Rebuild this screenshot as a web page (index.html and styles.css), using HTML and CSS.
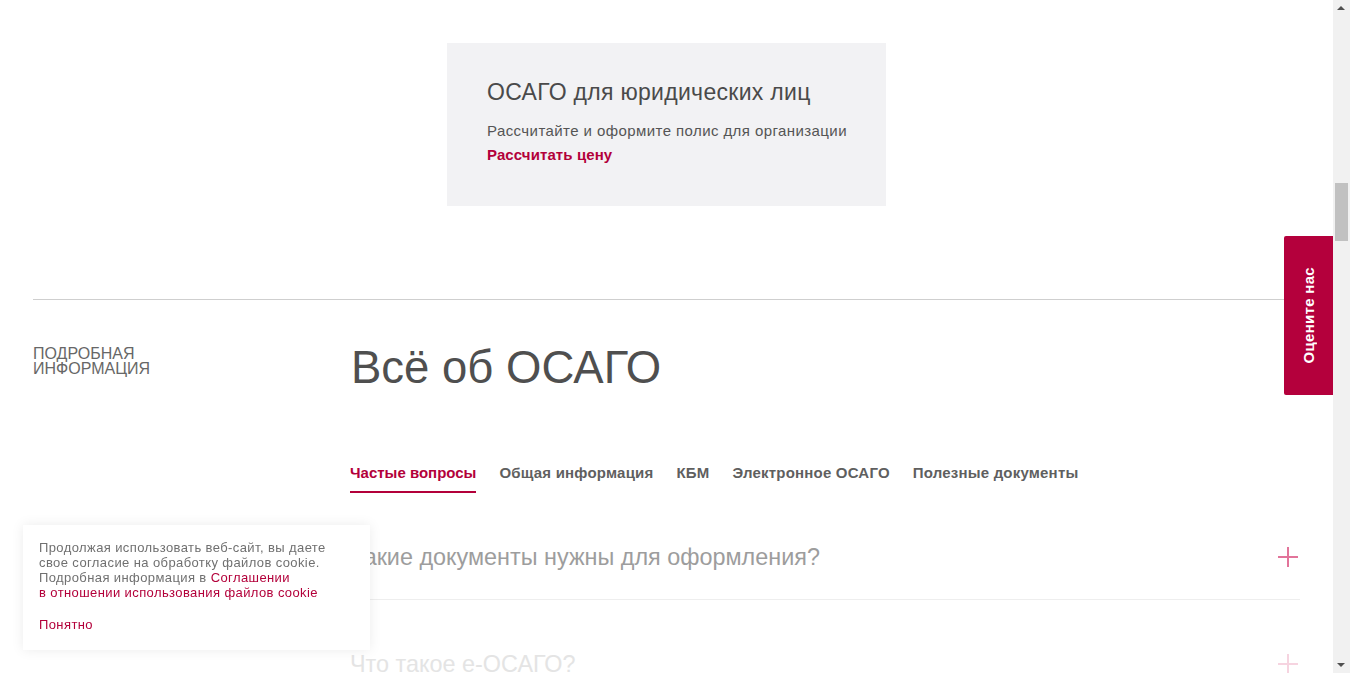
FILE: index.html
```html
<!DOCTYPE html>
<html lang="ru">
<head>
<meta charset="utf-8">
<title>Всё об ОСАГО</title>
<link rel="stylesheet" href="styles.css">
</head>
<body>
<div class="page">
  <section class="promo">
    <div class="promo-card">
      <h3 class="promo-title">ОСАГО для юридических лиц</h3>
      <p class="promo-text">Рассчитайте и оформите полис для организации</p>
      <a class="promo-link" href="#">Рассчитать цену</a>
    </div>
  </section>

  <section class="info">
    <div class="info-label">Подробная<br>информация</div>
    <div class="info-main">
      <h2 class="info-title">Всё об ОСАГО</h2>
      <nav class="tabs">
        <a class="tab tab-active" href="#">Частые вопросы</a>
        <a class="tab" href="#">Общая информация</a>
        <a class="tab" href="#">КБМ</a>
        <a class="tab" href="#">Электронное ОСАГО</a>
        <a class="tab" href="#">Полезные документы</a>
      </nav>
      <div class="faq">
        <div class="faq-item">
          <span class="faq-q">Какие документы нужны для оформления?</span>
          <span class="plus"></span>
        </div>
        <div class="faq-item faq-faded">
          <span class="faq-q">Что такое е-ОСАГО?</span>
          <span class="plus"></span>
        </div>
      </div>
    </div>
  </section>
</div>

<a class="rate-btn" href="#"><span>Оцените нас</span></a>

<div class="cookie">
  <p class="cookie-text">Продолжая использовать веб-сайт, вы даете<br>свое согласие на обработку файлов cookie.<br>Подробная информация в <a href="#">Соглашении<br>в отношении использования файлов cookie</a></p>
  <a class="cookie-ok" href="#">Понятно</a>
</div>

<div class="scrollbar">
  <span class="sb-arrow sb-up"></span>
  <span class="sb-thumb"></span>
  <span class="sb-arrow sb-down"></span>
</div>
</body>
</html>
```

FILE: styles.css
```css
* { box-sizing: border-box; }
html, body { margin: 0; padding: 0; }
body {
  font-family: "Liberation Sans", Arial, sans-serif;
  background: #fff;
  color: #4f4f4f;
  overflow: hidden;
  height: 673px;
}
a { text-decoration: none; }

.page { width: 1333px; height: 673px; overflow: hidden; }

.promo {
  display: flex;
  justify-content: center;
  padding-top: 43px;
}
.promo-card {
  width: 439px;
  height: 163px;
  background: #f2f2f4;
  padding: 36px 30px 0 40px;
}
.promo-title {
  margin: 0 0 14px;
  font-size: 23px;
  line-height: 26px;
  letter-spacing: 0.3px;
  font-weight: normal;
  color: #4a4a4a;
}
.promo-text {
  margin: 0;
  font-size: 15px;
  line-height: 24px;
  letter-spacing: 0.42px;
  white-space: nowrap;
  color: #555;
}
.promo-link {
  display: block;
  font-size: 15px;
  line-height: 24px;
  font-weight: bold;
  letter-spacing: 0.1px;
  color: #b3003a;
}

.info {
  margin: 93px 33px 0;
  border-top: 1px solid #cfcfcf;
  padding-top: 45px;
  display: grid;
  grid-template-columns: 317px 1fr;
}
.info-label {
  font-size: 16px;
  line-height: 15px;
  text-transform: uppercase;
  color: #676767;
  padding-top: 1px;
}
.info-title {
  margin: 0 0 73px 1px;
  font-size: 45.5px;
  line-height: 45px;
  font-weight: normal;
  color: #4f4f4f;
}
.tabs {
  display: flex;
  gap: 23px;
}
.tab {
  font-size: 15px;
  line-height: 20px;
  font-weight: bold;
  color: #5f5f5f;
  padding-bottom: 8px;
  border-bottom: 2px solid transparent;
  letter-spacing: 0.2px;
}
.tab-active {
  color: #b3003a;
  border-bottom-color: #b3003a;
  letter-spacing: 0;
}

.faq-item {
  display: flex;
  justify-content: space-between;
  align-items: center;
  padding: 51px 2px 29px 0;
  border-bottom: 1px solid #eeeeee;
}
.faq-q {
  font-size: 23.4px;
  line-height: 26px;
  color: #9d9d9d;
}
.plus {
  position: relative;
  width: 20px;
  height: 20px;
}
.plus::before, .plus::after {
  content: "";
  position: absolute;
  background: #e2749a;
}
.plus::before { left: 0; right: 0; top: 9px; height: 2px; }
.plus::after { top: 0; bottom: 0; left: 9px; width: 2px; }
.faq-faded .faq-q { color: #e4e4e4; }
.faq-faded .plus { opacity: 0.3; }

.rate-btn {
  position: fixed;
  left: 1284px;
  top: 236px;
  width: 49px;
  height: 159px;
  background: #b4003c;
  border-radius: 2px 0 0 2px;
  display: flex;
  align-items: center;
  justify-content: center;
}
.rate-btn span {
  writing-mode: vertical-rl;
  transform: rotate(180deg);
  color: #fff;
  font-weight: bold;
  font-size: 15px;
  line-height: 16px;
  letter-spacing: 0.3px;
}

.cookie {
  position: fixed;
  left: 23px;
  top: 525px;
  width: 347px;
  height: 125px;
  background: #fff;
  box-shadow: 0 0 12px rgba(0, 0, 0, 0.08);
  padding: 15px 16px 0;
}
.cookie-text {
  margin: 0 0 17px;
  font-size: 13px;
  line-height: 15px;
  letter-spacing: 0.4px;
  color: #707070;
}
.cookie-text a, .cookie-ok { color: #b3003a; }
.cookie-ok {
  display: block;
  font-size: 13px;
  line-height: 15px;
  letter-spacing: 0.4px;
}

.scrollbar {
  position: fixed;
  top: 0;
  right: 0;
  width: 17px;
  height: 673px;
  background: #f1f1f1;
}
.sb-thumb {
  position: absolute;
  left: 2px;
  top: 183px;
  width: 13px;
  height: 58px;
  background: #c1c1c1;
}
.sb-arrow {
  position: absolute;
  left: 4px;
  width: 0;
  height: 0;
  border-left: 4px solid transparent;
  border-right: 4px solid transparent;
}
.sb-up { top: 6px; border-bottom: 4px solid #505050; }
.sb-down { bottom: 6px; border-top: 4px solid #505050; }
```
